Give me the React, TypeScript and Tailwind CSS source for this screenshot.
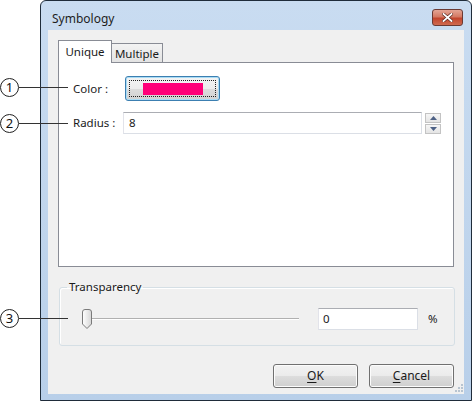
import React from "react";

const font = { fontFamily: '"Noto Sans", "Open Sans", Arial, sans-serif' };

function Callout({ n, top }: { n: string; top: string }) {
  return (
    <div className={`absolute left-0 flex items-center ${top}`}>
      <div className="w-[19px] h-[19px] rounded-full border border-[#222] flex items-center justify-center text-[13px] leading-none text-[#111]">
        {n}
      </div>
      <div className="w-[49px] h-px bg-[#333]" />
    </div>
  );
}

function WinButton({ u, rest }: { u: string; rest: string }) {
  return (
    <button className="w-[85px] h-[24px] rounded-[3px] border border-[#707070] bg-[linear-gradient(#f2f2f2_0%,#ebebeb_50%,#dddddd_50%,#cfcfcf_100%)] shadow-[inset_0_0_0_1px_#fcfcfc] text-[12px] text-[#1a1a1a]">
      <span className="underline underline-offset-2">{u}</span>
      {rest}
    </button>
  );
}

function Thumb() {
  return (
    <svg width="12" height="21" viewBox="0 0 12 21">
      <defs>
        <linearGradient id="tg" x1="0" x2="1" y1="0" y2="0">
          <stop offset="0" stopColor="#ffffff" />
          <stop offset="1" stopColor="#d6d6d6" />
        </linearGradient>
      </defs>
      <path d="M1.5 3 Q1.5 0.5 4 0.5 L8 0.5 Q10.5 0.5 10.5 3 L10.5 15 L6 19.5 L1.5 15 Z" fill="url(#tg)" stroke="#7a7a7a" />
    </svg>
  );
}

export default function App() {
  return (
    <div className="relative w-[472px] h-[402px] bg-white overflow-hidden" style={font}>
      <div className="ml-[40px] w-[432px] h-[401px] border border-[#1f2c3a] rounded-t-[6px] bg-[linear-gradient(#c9dcf1,#b8cfe9)] flex flex-col">
        {/* title bar */}
        <div className="h-[29px] flex items-start justify-between pl-[11px] pr-[8px]">
          <span className="mt-[11px] text-[12px] leading-[14px] text-[#1e1e1e]">Symbology</span>
          <div className="mt-[8px] w-[31px] h-[17px] rounded-[3px] border border-[#6b3a33] bg-[linear-gradient(#e4a595_0%,#d47a64_45%,#c2452d_55%,#cf6a50_100%)] flex items-center justify-center">
            <svg width="11" height="9" viewBox="0 0 11 9">
              <path d="M1.5 1 L9.5 8 M9.5 1 L1.5 8" stroke="#5b2a22" strokeWidth="3.2" strokeLinecap="square" />
              <path d="M1.5 1 L9.5 8 M9.5 1 L1.5 8" stroke="#ffffff" strokeWidth="1.8" strokeLinecap="square" />
            </svg>
          </div>
        </div>

        {/* client area */}
        <div className="relative ml-[7px] w-[416px] h-[364px] bg-[#f0f0f0] pl-[10px] pr-[10px] pt-[10px] flex flex-col text-[11.5px] text-[#1a1a1a]">
          {/* tabs */}
          <div className="flex items-end h-[22px]">
            <div className="relative z-10 -mb-px w-[54px] h-[23px] bg-white border border-b-0 border-[#898c95] flex items-start justify-center pt-[2px]">
              Unique
            </div>
            <div className="w-[51px] h-[19px] bg-[linear-gradient(#f3f3f3,#e3e3e3)] border border-l-0 border-b-0 border-[#898c95] flex items-start justify-center pt-px">
              Multiple
            </div>
          </div>
          <div className="h-[205px] bg-white border border-[#898c95] pl-[14px] pt-[13px] flex flex-col">
            <div className="flex items-center h-[25px]">
              <span className="w-[52px]">Color :</span>
              <div className="w-[95px] h-[25px] rounded-[3px] border border-[#3c7fb1] shadow-[inset_0_0_0_1px_#a9dcf5] bg-[linear-gradient(#f4f4f4_0%,#ececec_50%,#dcdcdc_50%,#d2d2d2_100%)] p-[3px]">
                <div className="w-full h-full border border-dotted border-[#222] flex items-center justify-center">
                  <div className="w-[60px] h-[12px] bg-[#ff0078]" />
                </div>
              </div>
            </div>
            <div className="flex items-center mt-[11px] h-[22px]">
              <span className="w-[50px]">Radius :</span>
              <div className="w-[299px] h-[22px] border border-[#dbdfe6] border-t-[#abadb3] border-l-[#e2e3ea] bg-white pl-[5px] flex items-center">
                8
              </div>
              <div className="ml-[3px] w-[16px] h-[21px] flex flex-col gap-px">
                <div className="h-[10px] border border-[#c3c3c3] bg-[linear-gradient(#f6f6f6,#e4e4e4)] flex items-center justify-center">
                  <svg width="7" height="4" viewBox="0 0 7 4"><path d="M0 4 L3.5 0 L7 4 Z" fill="#4d6185" /></svg>
                </div>
                <div className="h-[10px] border border-[#c3c3c3] bg-[linear-gradient(#f6f6f6,#e4e4e4)] flex items-center justify-center">
                  <svg width="7" height="4" viewBox="0 0 7 4"><path d="M0 0 L3.5 4 L7 0 Z" fill="#4d6185" /></svg>
                </div>
              </div>
            </div>
          </div>

          {/* transparency group */}
          <fieldset className="mt-[12px] ml-px w-[396px] h-[67px] border border-[#d5dfe5] rounded-[3px] shadow-[inset_1px_1px_0_#ffffff]">
            <legend className="ml-[7px] px-[2px] leading-[16px]">Transparency</legend>
            <div className="flex items-center mt-[13px] h-[22px] pl-[21px]">
              <div className="relative w-[218px] h-[21px] flex items-center">
                <div className="absolute left-[2px] right-0 top-[9px] h-[2px] border-t border-[#b0b0b0] border-b border-b-white" />
                <div className="relative"><Thumb /></div>
              </div>
              <div className="ml-[19px] w-[100px] h-[22px] border border-[#dbdfe6] border-t-[#abadb3] border-l-[#e2e3ea] bg-white pl-[4px] flex items-center">
                0
              </div>
              <span className="ml-[10px]">%</span>
            </div>
          </fieldset>

          {/* buttons */}
          <div className="mt-[18px] flex justify-end gap-[11px]">
            <WinButton u="O" rest="K" />
            <WinButton u="C" rest="ancel" />
          </div>

          <svg className="absolute right-[1px] bottom-[2px]" width="8" height="8" viewBox="0 0 8 8">
            <g fill="#b8c4d0">
              <rect x="6" y="0" width="2" height="2" />
              <rect x="3" y="3" width="2" height="2" />
              <rect x="6" y="3" width="2" height="2" />
              <rect x="0" y="6" width="2" height="2" />
              <rect x="3" y="6" width="2" height="2" />
              <rect x="6" y="6" width="2" height="2" />
            </g>
          </svg>
        </div>
      </div>

      {/* annotation callouts */}
      <Callout n="1" top="top-[78px]" />
      <Callout n="2" top="top-[114px]" />
      <Callout n="3" top="top-[309px]" />
    </div>
  );
}
